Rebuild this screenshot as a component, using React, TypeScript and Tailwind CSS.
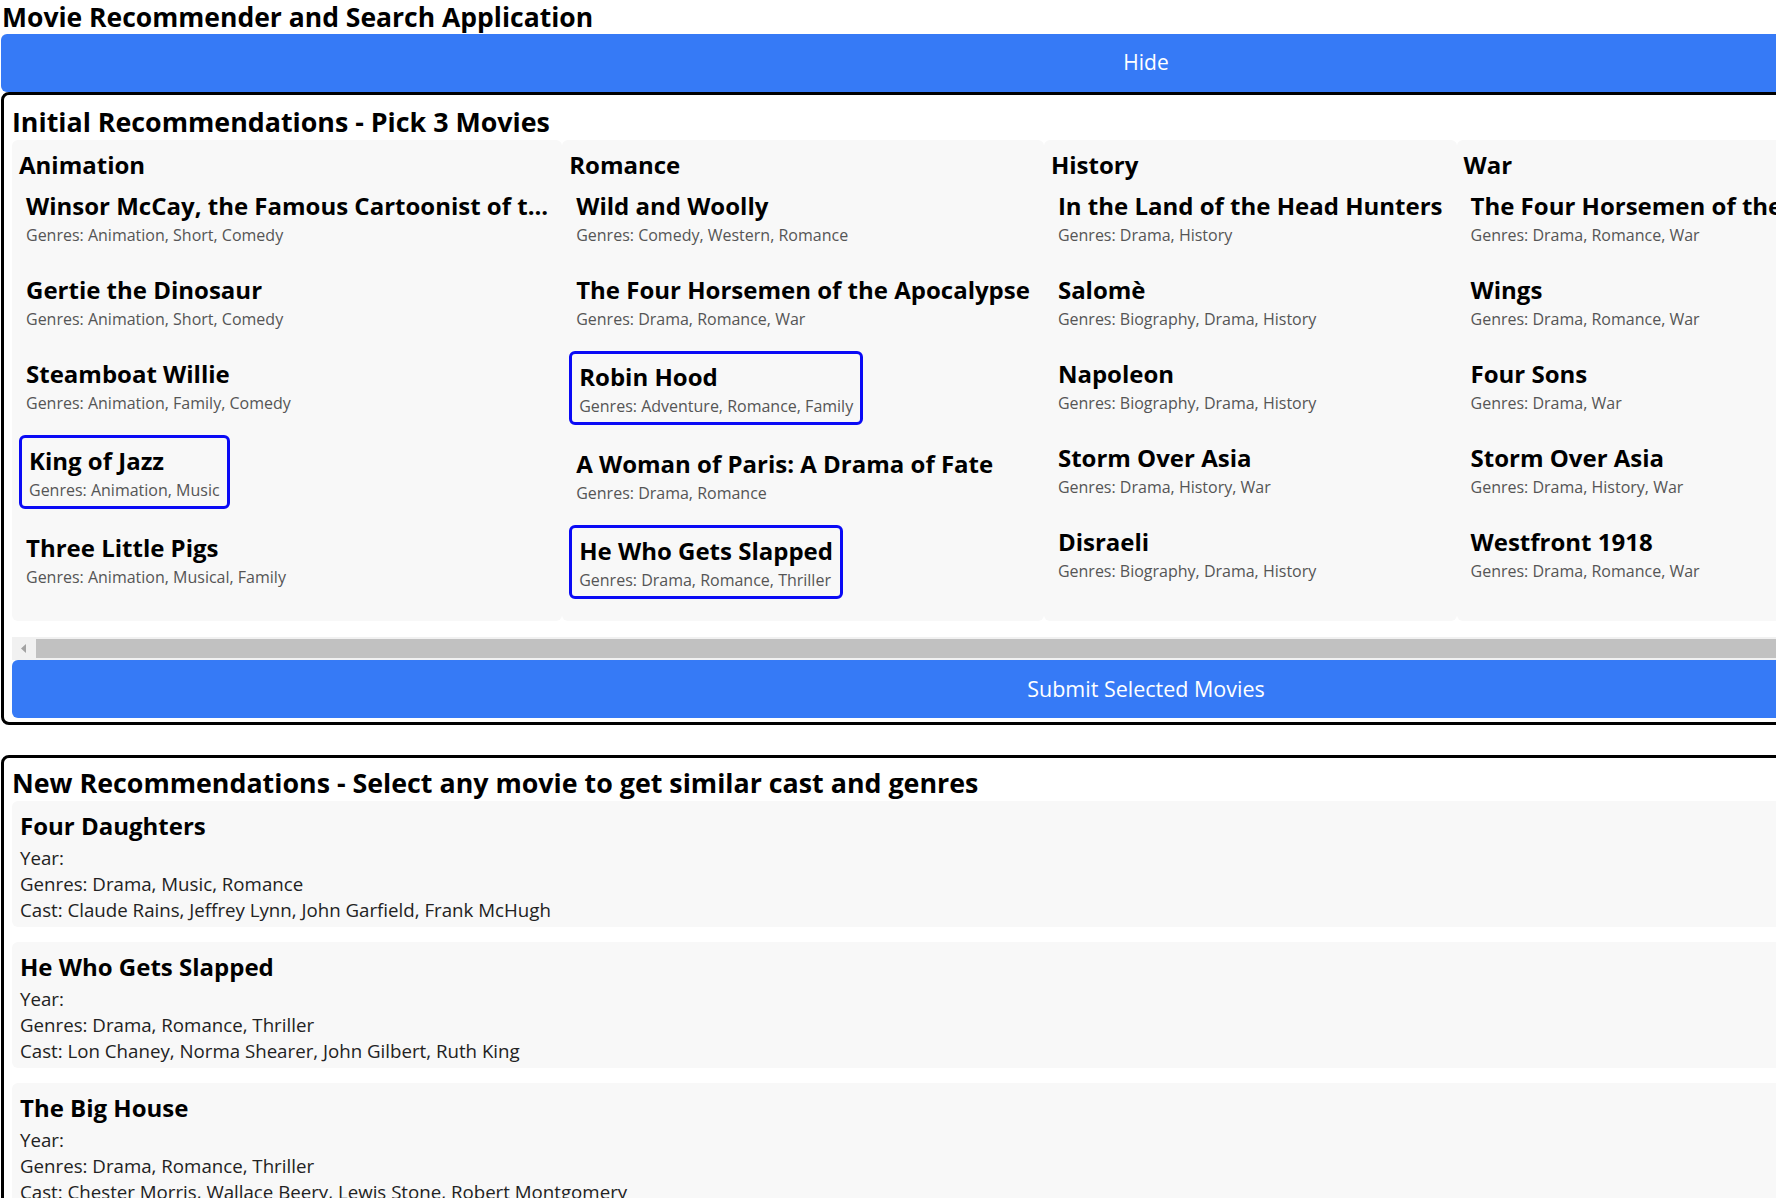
import React, { useState } from "react";

interface Movie {
  title: string;
  genres: string[];
}

interface GenreGroup {
  genre: string;
  movies: Movie[];
}

interface Recommendation {
  title: string;
  year: string;
  genres: string[];
  cast: string[];
}

const initialGroups: GenreGroup[] = [
  {
    genre: "Animation",
    movies: [
      { title: "Winsor McCay, the Famous Cartoonist of the N.Y. Herald and His Moving Comics", genres: ["Animation", "Short", "Comedy"] },
      { title: "Gertie the Dinosaur", genres: ["Animation", "Short", "Comedy"] },
      { title: "Steamboat Willie", genres: ["Animation", "Family", "Comedy"] },
      { title: "King of Jazz", genres: ["Animation", "Music"] },
      { title: "Three Little Pigs", genres: ["Animation", "Musical", "Family"] },
    ],
  },
  {
    genre: "Romance",
    movies: [
      { title: "Wild and Woolly", genres: ["Comedy", "Western", "Romance"] },
      { title: "The Four Horsemen of the Apocalypse", genres: ["Drama", "Romance", "War"] },
      { title: "Robin Hood", genres: ["Adventure", "Romance", "Family"] },
      { title: "A Woman of Paris: A Drama of Fate", genres: ["Drama", "Romance"] },
      { title: "He Who Gets Slapped", genres: ["Drama", "Romance", "Thriller"] },
    ],
  },
  {
    genre: "History",
    movies: [
      { title: "In the Land of the Head Hunters", genres: ["Drama", "History"] },
      { title: "Salomè", genres: ["Biography", "Drama", "History"] },
      { title: "Napoleon", genres: ["Biography", "Drama", "History"] },
      { title: "Storm Over Asia", genres: ["Drama", "History", "War"] },
      { title: "Disraeli", genres: ["Biography", "Drama", "History"] },
    ],
  },
  {
    genre: "War",
    movies: [
      { title: "The Four Horsemen of the Apocalypse", genres: ["Drama", "Romance", "War"] },
      { title: "Wings", genres: ["Drama", "Romance", "War"] },
      { title: "Four Sons", genres: ["Drama", "War"] },
      { title: "Storm Over Asia", genres: ["Drama", "History", "War"] },
      { title: "Westfront 1918", genres: ["Drama", "Romance", "War"] },
    ],
  },
];

const newRecommendations: Recommendation[] = [
  {
    title: "Four Daughters",
    year: "",
    genres: ["Drama", "Music", "Romance"],
    cast: ["Claude Rains", "Jeffrey Lynn", "John Garfield", "Frank McHugh"],
  },
  {
    title: "He Who Gets Slapped",
    year: "",
    genres: ["Drama", "Romance", "Thriller"],
    cast: ["Lon Chaney", "Norma Shearer", "John Gilbert", "Ruth King"],
  },
  {
    title: "The Big House",
    year: "",
    genres: ["Drama", "Romance", "Thriller"],
    cast: ["Chester Morris", "Wallace Beery", "Lewis Stone", "Robert Montgomery"],
  },
];

// titles longer than 40 chars get cut like the original app does
const truncate = (s: string) => (s.length > 40 ? s.slice(0, 40) + "..." : s);

const App: React.FC = () => {
  const [showInitial, setShowInitial] = useState<boolean>(true);
  const [selected, setSelected] = useState<string[]>([
    "Animation|King of Jazz",
    "Romance|Robin Hood",
    "Romance|He Who Gets Slapped",
  ]);

  const toggle = (key: string) => {
    setSelected((prev) =>
      prev.includes(key)
        ? prev.filter((k) => k !== key)
        : prev.length < 3
          ? [...prev, key]
          : prev,
    );
  };

  return (
    <div className="h-screen w-screen overflow-hidden bg-white font-['Segoe_UI','Open_Sans',sans-serif] text-black">
      <div className="w-[2292px] px-px">
        <h1 className="pl-px text-[26.5px] font-bold leading-[34px]">
          Movie Recommender and Search Application
        </h1>

        <button
          onClick={() => setShowInitial(!showInitial)}
          className="block h-[58px] w-full rounded-md bg-[#367af6] text-[21px] text-white"
        >
          {showInitial ? "Hide" : "Show"}
        </button>

        {showInitial && (
          <div className="rounded-lg border-[3px] border-black px-2 pt-[10px] pb-[4px]">
            <h2 className="mb-px text-[26.8px] font-bold leading-[34px]">
              Initial Recommendations - Pick 3 Movies
            </h2>

            <div className="overflow-hidden">
              <div className="flex pb-4">
                {initialGroups.map((group) => (
                  <div
                    key={group.genre}
                    className="flex shrink-0 flex-col items-start rounded-md bg-[#f8f8f8] px-[7px] pt-2 pb-[6px]"
                  >
                    <h3 className="mb-[2px] text-[24px] font-bold leading-[33px]">
                      {group.genre}
                    </h3>
                    {group.movies.map((m) => {
                      const key = `${group.genre}|${m.title}`;
                      const isSelected = selected.includes(key);
                      return (
                        <button
                          key={key}
                          onClick={() => toggle(key)}
                          className={
                            isSelected
                              ? "mb-4 block rounded-md border-[3px] border-[#0a0af5] px-[7px] pt-[6px] pb-[4px] text-left"
                              : "mb-4 block rounded-md px-[7px] pt-[6px] pb-[4px] text-left"
                          }
                        >
                          <div className="whitespace-nowrap text-[24px] font-bold leading-[34px]">
                            {truncate(m.title)}
                          </div>
                          <div className="whitespace-nowrap text-[16px] leading-[24px] text-[#555]">
                            Genres: {m.genres.join(", ")}
                          </div>
                        </button>
                      );
                    })}
                  </div>
                ))}
              </div>
            </div>

            {/* scrollbar of the genre strip */}
            <div className="flex h-[23px] bg-[#f1f1f1]">
              <div className="flex w-[24px] items-center justify-center">
                <svg width="6" height="9" viewBox="0 0 6 9">
                  <path d="M5 0 L0 4.5 L5 9 Z" fill="#a3a3a3" />
                </svg>
              </div>
              <div className="my-[2px] mr-[400px] flex-1 bg-[#c1c1c1]" />
            </div>

            <button className="block h-[58px] w-full rounded-md bg-[#367af6] text-[21.5px] text-white">
              Submit Selected Movies
            </button>
          </div>
        )}

        <div className="mt-[30px] rounded-lg border-[3px] border-black px-2 pt-[8px] pb-2">
          <h2 className="mb-px text-[26.8px] font-bold leading-[34px]">
            New Recommendations - Select any movie to get similar cast and genres
          </h2>
          <div className="flex flex-col gap-[15px]">
            {newRecommendations.map((r) => (
              <div
                key={r.title}
                className="cursor-pointer rounded-md bg-[#f8f8f8] px-2 pt-2 pb-1"
              >
                <div className="mb-[2px] text-[24px] font-bold leading-[34px]">
                  {r.title}
                </div>
                <div className="text-[18.7px] leading-[26px] text-[#222]">
                  Year: {r.year}
                </div>
                <div className="text-[18.7px] leading-[26px] text-[#222]">
                  Genres: {r.genres.join(", ")}
                </div>
                <div className="text-[18.7px] leading-[26px] text-[#222]">
                  Cast: {r.cast.join(", ")}
                </div>
              </div>
            ))}
          </div>
        </div>
      </div>
    </div>
  );
};

export default App;
